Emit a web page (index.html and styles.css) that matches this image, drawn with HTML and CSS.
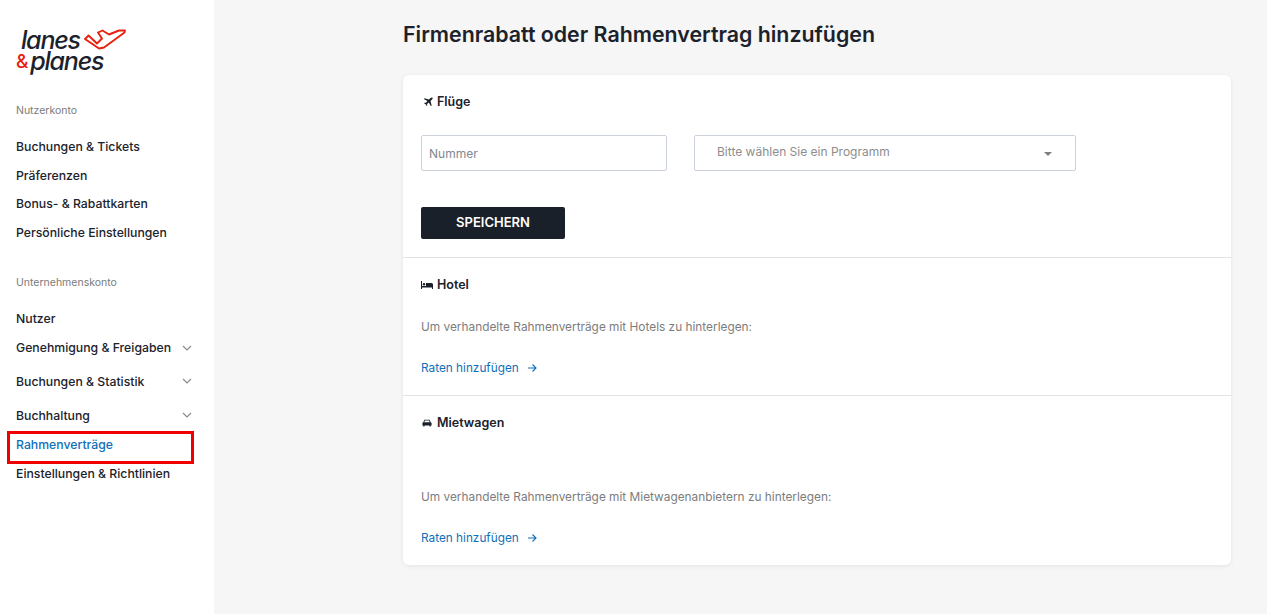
FILE: index.html
```html
<!DOCTYPE html>
<html lang="de">

<head>
    <meta charset="UTF-8">
    <title>Firmenrabatt oder Rahmenvertrag hinzufügen</title>
    <link rel="stylesheet" href="styles.css">
</head>

<body>
    <aside class="sidebar">
        <div class="logo">
            <div class="logo-line logo-line-top">lanes
                <svg class="logo-plane" width="42" height="21" viewBox="0 0 42 21" fill="none" stroke="#e8200f" stroke-width="1.9" stroke-linejoin="round">
                    <path d="M1 10L4.500 6.500 13 14.500 18 9.500 14 3.500 18.500 1.500 25 5.500 35 1.500 41 1.500 40.500 3.500 20 18.500 15 19.500Z"></path>
                </svg>
            </div>
            <div class="logo-line"><span class="logo-amp">&amp;</span>planes</div>
        </div>

        <h4 class="nav-heading">Nutzerkonto</h4>
        <nav class="nav-group">
            <a class="nav-item" href="#">Buchungen &amp; Tickets</a>
            <a class="nav-item" href="#">Präferenzen</a>
            <a class="nav-item" href="#">Bonus- &amp; Rabattkarten</a>
            <a class="nav-item" href="#">Persönliche Einstellungen</a>
        </nav>

        <h4 class="nav-heading nav-heading-second">Unternehmenskonto</h4>
        <nav class="nav-group">
            <a class="nav-item nav-item-first" href="#">Nutzer</a>
            <a class="nav-item nav-item-sub nav-item-gap" href="#">Genehmigung &amp; Freigaben
                <svg class="chevron" width="10" height="6" viewBox="0 0 10 6"><path d="M1 1l4 4 4-4"></path></svg>
            </a>
            <a class="nav-item nav-item-sub nav-item-gap" href="#">Buchungen &amp; Statistik
                <svg class="chevron" width="10" height="6" viewBox="0 0 10 6"><path d="M1 1l4 4 4-4"></path></svg>
            </a>
            <a class="nav-item nav-item-sub" href="#">Buchhaltung
                <svg class="chevron" width="10" height="6" viewBox="0 0 10 6"><path d="M1 1l4 4 4-4"></path></svg>
            </a>
            <a class="nav-item nav-item-active" href="#">Rahmenverträge</a>
            <a class="nav-item" href="#">Einstellungen &amp; Richtlinien</a>
        </nav>
    </aside>

    <main class="content">
        <h1>Firmenrabatt oder Rahmenvertrag hinzufügen</h1>

        <div class="card">
            <section class="card-section section-flights">
                <h2>
                    <svg class="section-icon section-icon-small" viewBox="0 0 12 12"><path d="M11.300.7c-.5-.5-1.600-.2-2.300.5L7.200 3 1.800 1.500 1 2.300l4.300 2.600L3.400 7 1.900 6.800l-.7.700 2 1.200 1.200 2 .7-.7L4.900 8.500 7 6.700l2.600 4.300.8-.8L9 4.800l1.800-1.800c.7-.7 1-1.800.5-2.300z"></path></svg>
                    Flüge
                </h2>
                <div class="form-row">
                    <input class="text-input" type="text" placeholder="Nummer">
                    <div class="select-box">
                        <span>Bitte wählen Sie ein Programm</span>
                        <i class="caret"></i>
                    </div>
                </div>
                <button class="save-button" type="button">SPEICHERN</button>
            </section>

            <section class="card-section section-hotel">
                <h2>
                    <svg class="section-icon" viewBox="0 0 12 12"><path d="M0 2h1v5h4V4h5.500A1.500 1.500 0 0 1 12 5.500V10h-1V8.500H1V10H0z"></path><circle cx="3" cy="5.300" r="1.200"></circle></svg>
                    Hotel
                </h2>
                <p>Um verhandelte Rahmenverträge mit Hotels zu hinterlegen:</p>
                <a class="add-link" href="#">Raten hinzufügen
                    <svg width="10" height="10" viewBox="0 0 10 10"><path d="M1 5h8M5.500 1.500L9 5 5.500 8.500"></path></svg>
                </a>
            </section>

            <section class="card-section section-cars">
                <h2>
                    <svg class="section-icon section-icon-car" viewBox="0 0 12 12"><path d="M2.800 2h6.400l1.200 3.200c.9.200 1.100.700 1.100 1.300v2.500h-1v1.200H9V9H3v1.200H1.500V9h-1V6.500c0-.6.200-1.100 1.100-1.300zm.7 1L2.700 5.200h6.600L8.500 3z"></path></svg>
                    Mietwagen
                </h2>
                <p>Um verhandelte Rahmenverträge mit Mietwagenanbietern zu hinterlegen:</p>
                <a class="add-link" href="#">Raten hinzufügen
                    <svg width="10" height="10" viewBox="0 0 10 10"><path d="M1 5h8M5.500 1.500L9 5 5.500 8.500"></path></svg>
                </a>
            </section>
        </div>
    </main>
</body>

</html>
```

FILE: styles.css
```css
* {
  box-sizing: border-box;
}
html, body {
  height: 100%;
}
body {
  margin: 0;
  display: flex;
  background-color: #f6f6f6;
  color: #1b222b;
  font-family: "Inter", "Liberation Sans", sans-serif;
  font-size: 13px;
  overflow: hidden;
}
a {
  text-decoration: none;
}

/* sidebar */
.sidebar {
  width: 214px;
  flex-shrink: 0;
  background-color: #ffffff;
  padding: 30px 0 0 16px;
}
.logo {
  height: 45px;
  color: #1b222b;
  font-size: 25px;
  font-style: italic;
  font-weight: 500;
  letter-spacing: -1.2px;
  line-height: 21px;
}
.logo-line {
  display: flex;
  align-items: center;
}
.logo-line-top {
  margin-left: 5px;
}
.logo-plane {
  margin: -2px 0 0 4px;
}
.logo-amp {
  color: #e8200f;
  font-size: 19px;
  font-style: normal;
  margin-right: 3px;
}
.nav-heading {
  margin: 28px 0 0;
  color: #7b7b7b;
  font-size: 10.5px;
  font-weight: 400;
  line-height: 16px;
}
.nav-heading-second {
  margin-top: 28px;
}
.nav-group {
  margin-top: 13px;
}
.nav-item {
  display: flex;
  align-items: center;
  width: 176px;
  height: 28.7px;
  color: #1b222b;
  font-size: 12.25px;
  font-weight: 500;
}
.nav-item-first {
  margin-bottom: 1px;
}
.nav-item-sub {
  justify-content: space-between;
}
.nav-item-gap {
  margin-bottom: 5px;
}
.nav-item-active {
  position: relative;
  margin-top: 1px;
  color: #0f6fb8;
}
/* red marker drawn over the menu entry */
.nav-item-active::after {
  content: "";
  position: absolute;
  left: -9px;
  top: 0;
  width: 181px;
  height: 27px;
  border: 3px solid #f00000;
}
.chevron {
  fill: none;
  stroke: #8a8a8a;
  stroke-width: 1.2;
}

/* main column */
.content {
  flex-grow: 1;
  padding: 0 36px 0 189px;
}
h1 {
  margin: 0;
  padding-top: 21px;
  height: 75px;
  font-size: 21.35px;
  font-weight: 600;
  line-height: 27px;
}
.card {
  height: 490px;
  background-color: #ffffff;
  border-radius: 6px;
  box-shadow: 0 1px 4px rgba(0, 0, 0, 0.08);
}
.card-section {
  padding: 18px 18px 0;
  border-bottom: 1px solid #e3e3e3;
}
.card-section:last-child {
  border-bottom: 0;
}
.section-flights {
  height: 183px;
}
.section-hotel {
  height: 138px;
}
h2 {
  display: flex;
  align-items: center;
  gap: 4px;
  margin: 0;
  font-size: 12.5px;
  font-weight: 600;
  line-height: 18px;
}
.section-icon {
  width: 12px;
  height: 12px;
  fill: #1b222b;
}
.section-icon-small {
  width: 10px;
  height: 10px;
  margin-left: 2px;
}
.section-icon-car {
  width: 10px;
  height: 10px;
  margin: 0 1px;
}
.form-row {
  display: flex;
  gap: 27px;
  margin-top: 24px;
}
.text-input {
  width: 246px;
  height: 36px;
  padding: 0 7px;
  border: 1px solid #ccd2dc;
  border-radius: 2px;
  font: inherit;
  font-size: 12px;
}
.text-input::placeholder {
  color: #7f8791;
  opacity: 1;
}
.select-box {
  display: flex;
  justify-content: space-between;
  align-items: center;
  width: 382px;
  height: 36px;
  padding: 0 23px 4px 22px;
  border: 1px solid #ccd2dc;
  border-radius: 2px;
  color: #8d8d8d;
  font-size: 12px;
}
.caret {
  margin-top: 6px;
  border-top: 4px solid #808080;
  border-left: 4px solid transparent;
  border-right: 4px solid transparent;
}
.save-button {
  display: block;
  width: 144px;
  height: 32px;
  margin-top: 36px;
  padding-bottom: 3px;
  border: 0;
  border-radius: 2px;
  background-color: #1a2029;
  color: #ffffff;
  font: inherit;
  font-size: 13px;
  font-weight: 600;
}
.card-section p {
  margin: 0;
  color: #7d7d7d;
  font-size: 11.85px;
  line-height: 18px;
}
.section-hotel p {
  margin-top: 24px;
}
.section-cars p {
  margin-top: 56px;
}
.add-link {
  display: flex;
  align-items: center;
  gap: 8px;
  margin-top: 23px;
  color: #0f6fb8;
  font-size: 11.8px;
  line-height: 18px;
}
.add-link svg {
  fill: none;
  stroke: #0f6fb8;
  stroke-width: 1.1;
}
```
